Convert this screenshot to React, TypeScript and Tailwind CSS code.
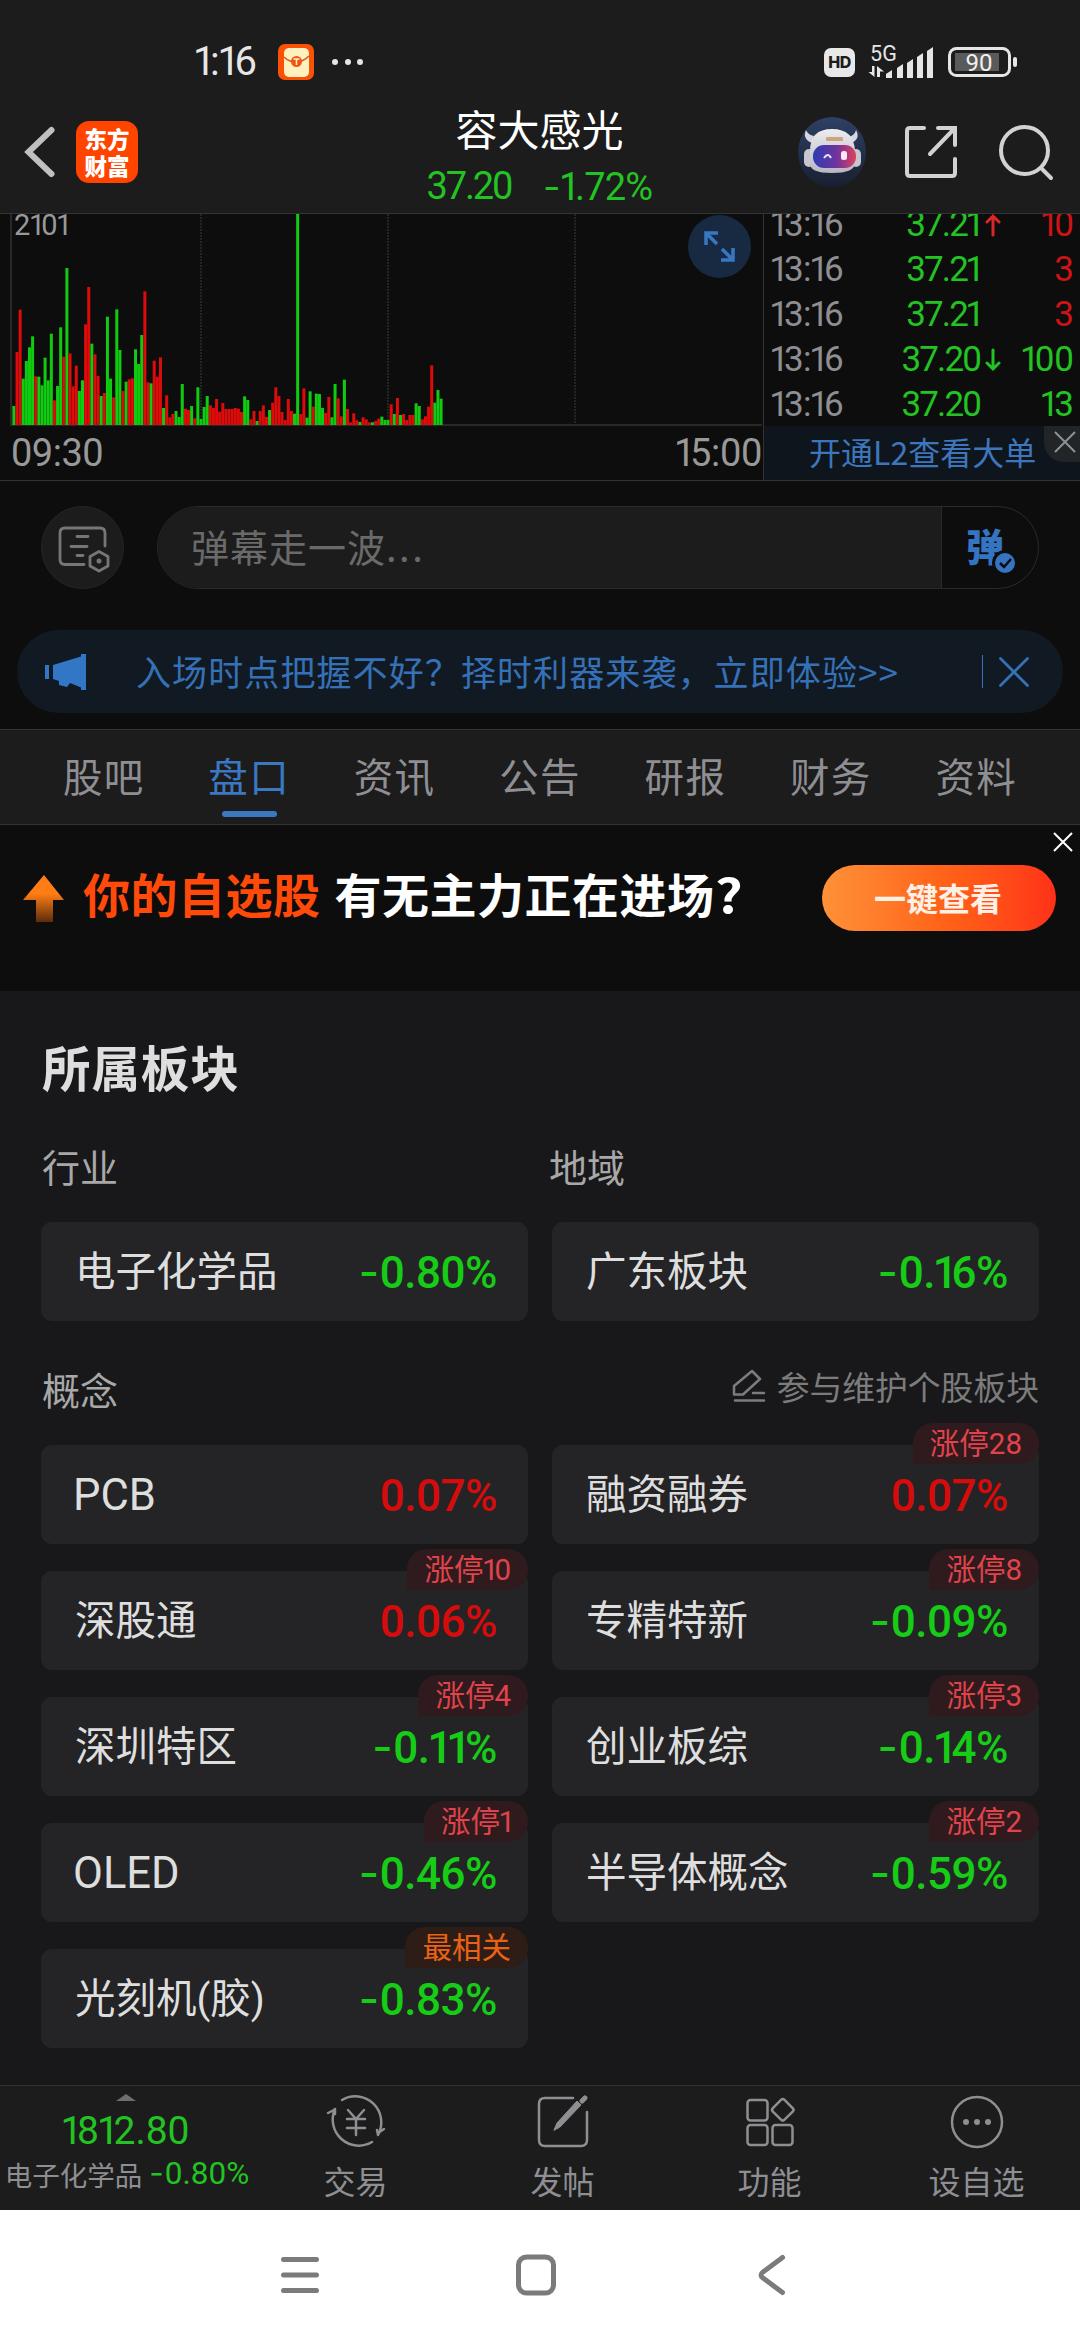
import { Fragment, type ReactNode } from "react";
import clsx from "clsx";

type Sector = {
    name: string;
    change: string;
    tag?: string;
    hot?: boolean;
};

const TABS = ["股吧", "盘口", "资讯", "公告", "研报", "财务", "资料"];

const TRADES = [
    { time: "13:16", price: "37.21", dir: "up", volume: "10", buy: true },
    { time: "13:16", price: "37.21", dir: "", volume: "3", buy: true },
    { time: "13:16", price: "37.21", dir: "", volume: "3", buy: true },
    { time: "13:16", price: "37.20", dir: "down", volume: "100", buy: false },
    { time: "13:16", price: "37.20", dir: "", volume: "13", buy: false },
];

const CONCEPTS: Sector[] = [
    { name: "PCB", change: "0.07%" },
    { name: "融资融券", change: "0.07%", tag: "涨停28" },
    { name: "深股通", change: "0.06%", tag: "涨停10" },
    { name: "专精特新", change: "-0.09%", tag: "涨停8" },
    { name: "深圳特区", change: "-0.11%", tag: "涨停4" },
    { name: "创业板综", change: "-0.14%", tag: "涨停3" },
    { name: "OLED", change: "-0.46%", tag: "涨停1" },
    { name: "半导体概念", change: "-0.59%", tag: "涨停2" },
    { name: "光刻机(胶)", change: "-0.83%", tag: "最相关", hot: true },
];

// Minute volume, one entry per bar: g = falling, r = rising, number = height * 3
const VOLUME = (
    "g57 r219 r346 g139 g192 g233 g266 r146 g145 g119 g202 g134 g274 r74 g117 g293 r205 g471 r215 r116 " +
    "r178 g102 g134 r302 r414 g244 r212 r147 g87 r96 g325 g139 r83 g347 g225 r102 g130 r137 r140 g227 " +
    "g183 g270 r401 r128 g125 r193 r145 r203 g51 r89 r23 r33 g42 g24 g123 r49 r45 g57 r20 g113 " +
    "g18 g54 g87 r59 r51 r78 r40 r66 r48 r48 r48 r51 r49 r39 g86 g75 r17 r42 g12 r42 " +
    "r59 r24 g45 r67 r113 r87 r39 r15 r78 r42 g34 g640 r33 r110 g22 g101 r55 g94 g93 g51 " +
    "r36 r84 g23 g123 r80 r26 g136 r48 r8 r35 r14 g9 r23 r17 r8 g8 r12 r19 g25 g15 " +
    "g15 r62 g33 r81 g30 r33 r15 r30 r30 g65 g57 r17 r26 r55 r179 g67 g105 g79"
)
    .split(" ")
    .map((s) => ({ up: s[0] === "r", h: Number(s.slice(1)) / 3 }));

// Figures: narrow "1" and a wide dash
function Num({ children, className }: { children: string; className?: string }) {
    return (
        <span className={clsx("whitespace-nowrap font-['Roboto','Noto_Sans_CJK_SC',sans-serif]", className)}>
            {children.split(/(1+|-)/).map((part, i) => {
                if (part[0] === "1") return <span key={i} className="-ml-[0.05em] tracking-[-0.14em]">{part}</span>;
                if (part === "-") return <span key={i} className="font-['Inter',sans-serif] mr-[0.03em]">-</span>;
                return <Fragment key={i}>{part}</Fragment>;
            })}
        </span>
    );
}

function StatusBar() {
    return (
        <div className="flex h-[98px] items-center pl-[195px] pr-[62px] pt-[26px]">
            <Num className="w-[64px] text-[40px] leading-none text-[#e6e6e6]">1:16</Num>
            <svg className="ml-[19px]" width="36" height="36" viewBox="0 0 36 36">
                <rect width="36" height="36" rx="7" fill="#fa5205" />
                <rect x="6" y="4" width="25" height="29" rx="5" fill="#fff0c0" />
                <path d="M6 13q5 5 12 5t13-6" fill="none" stroke="#e0531a" strokeWidth="1.5" />
                <circle cx="18.500" cy="17.500" r="5.500" fill="#ef5612" />
                <path d="M15.500 15h6M18.500 15v6" stroke="#fff0c8" strokeWidth="1.500" />
            </svg>
            <div className="ml-[18px] flex gap-[6.500px]">
                <i className="size-[6px] rounded-full bg-[#e6e6e6]" />
                <i className="size-[6px] rounded-full bg-[#e6e6e6]" />
                <i className="size-[6px] rounded-full bg-[#e6e6e6]" />
            </div>
            <span className="ml-auto flex h-[29px] w-[31px] items-center justify-center rounded-[7px] bg-[#e8e8e8] font-['Inter',sans-serif] text-[16px] font-extrabold tracking-[-0.5px] text-[#1c1c1c]">
                HD
            </span>
            <svg className="ml-[12px] overflow-visible font-['Roboto',sans-serif]" width="69" height="36" viewBox="865 44 69 36" fill="#e6e6e6">
                <text x="868" y="60.500" fontSize="21.500" textLength="27">5G</text>
                <path d="M870 66h2.500v11l-6-5h3.500zM875 77V66l7 5.500h-4V77z" />
                <path d="M884 78v-4l6-4v8zM895 78V68l6-4v14zM905 78V63l6-4v19zM915 78V57l6-4v25zM925 78V51l6-4v31z" />
            </svg>
            <svg className="ml-[11px]" width="71" height="32" viewBox="945 46 71 32">
                <rect x="947.500" y="48.500" width="60" height="27" rx="7" fill="none" stroke="#e6e6e6" strokeWidth="3" />
                <rect x="953" y="53" width="44" height="18" fill="#5a5a5a" />
                <rect x="1011" y="57" width="4" height="10" rx="2" fill="#e6e6e6" />
                <text x="977" y="70.500" textAnchor="middle" fontSize="24" fill="#f0f0f0" className="font-['Roboto',sans-serif]">90</text>
            </svg>
        </div>
    );
}

function Robot() {
    return (
        <svg className="block" width="68" height="70" viewBox="0 0 68 70">
            <defs>
                <linearGradient id="sky" x1="0" y1="0" x2="0" y2="1">
                    <stop offset="0" stopColor="#2e4065" />
                    <stop offset="1" stopColor="#182031" />
                </linearGradient>
                <linearGradient id="visor" x1="0" y1="0" x2="1" y2="0">
                    <stop offset="0" stopColor="#2b3db0" />
                    <stop offset="0.550" stopColor="#70349e" />
                    <stop offset="1" stopColor="#e0405a" />
                </linearGradient>
                <linearGradient id="shell" x1="0" y1="0" x2="0" y2="1">
                    <stop offset="0" stopColor="#ececf0" />
                    <stop offset="1" stopColor="#b9b6c2" />
                </linearGradient>
            </defs>
            <ellipse cx="34" cy="35" rx="34" ry="35" fill="url(#sky)" />
            <path d="M14 26Q4 22 8 13q2 5 8 6zM53 26q10-4 5-13-1 5-7 7z" fill="#d6d6de" />
            <rect x="6" y="32" width="10" height="18" rx="5" fill="#c6c5d0" />
            <rect x="53" y="32" width="10" height="18" rx="5" fill="#c6c5d0" />
            <path d="M12 34Q12 12 34 12t23 22v12q0 10-23 10T12 46z" fill="url(#shell)" />
            <rect x="28" y="20" width="17" height="4" rx="1" fill="#cda57c" />
            <rect x="15" y="28" width="43" height="23" rx="11" fill="url(#visor)" />
            <path d="M26 41q4-6 7 0" fill="none" stroke="#dfe6ff" strokeWidth="2" />
            <rect x="43" y="34" width="6" height="9" rx="2.500" fill="#ffe8f4" />
        </svg>
    );
}

function Header() {
    return (
        <header className="flex h-[116px] items-start justify-between border-b border-[#333] pl-[23px] pr-[24px]">
            <div className="flex w-[260px] items-center pt-[23px]">
                <svg width="34" height="62" viewBox="0 0 34 62">
                    <path d="M28.500 9 5.500 31l23 22" fill="none" stroke="#c0c0c0" strokeWidth="6" strokeLinecap="round" />
                </svg>
                <div className="ml-[19px] flex h-[62px] w-[62px] flex-col items-center justify-center rounded-[13px] bg-[#ff4400] font-['Noto_Sans_CJK_SC',sans-serif] text-[22.500px] font-black leading-[27px] text-white">
                    <span>东方</span>
                    <span>财富</span>
                </div>
            </div>
            <div className="flex flex-col items-center pt-[3px]">
                <h1 className="text-[42px] leading-[54px] text-white">容大感光</h1>
                <div className="mt-[6px] flex gap-[32px] text-[38px] leading-[50px] text-[#22c322]">
                    <Num className="tracking-[-2.200px]">37.20</Num>
                    <Num className="tracking-[-0.800px]">-1.72%</Num>
                </div>
            </div>
            <div className="flex w-[260px] items-center justify-end pt-[19px]">
                <Robot />
                <svg className="ml-[36px]" width="58" height="58" viewBox="901 123 58 58" fill="none" stroke="#d2d2d2" strokeWidth="4" strokeLinecap="round">
                    <path d="M923 128h-14q-3 0-3 3v42q0 3 3 3h42q3 0 3-3v-14M937 128h17v17M953 129l-24 25" />
                </svg>
                <svg className="ml-[36px]" width="60" height="60" viewBox="995 121 60 60" fill="none" stroke="#d2d2d2" strokeWidth="4" strokeLinecap="round">
                    <circle cx="1023.500" cy="149.500" r="23.500" />
                    <path d="m1040 167 10 10" />
                </svg>
            </div>
        </header>
    );
}

function VolumeChart() {
    return (
        <div className="relative w-[763px]">
            <svg className="block" width="763" height="212" viewBox="0 214 763 212">
                <path d="M201 214v210M388 214v210M575 214v210" stroke="#2c2c2c" strokeWidth="1.500" strokeDasharray="2 1" />
                <path d="M11 214v211M10 425h752" stroke="#282828" strokeWidth="2" fill="none" />
                {VOLUME.map((v, i) => (
                    <rect key={i} x={12.4 + i * 3.118} y={425 - v.h} width="3" height={v.h} fill={v.up ? "#de0b0b" : "#10cc10"} />
                ))}
            </svg>
            <div className="flex h-[54px] items-center justify-between pl-[11px] pr-[1px] text-[38px] leading-none text-[#999]">
                <Num className="tracking-[-0.500px]">09:30</Num>
                <Num className="tracking-[-0.300px]">15:00</Num>
            </div>
            <Num className="absolute left-[14px] top-[-3px] text-[29px] leading-[28px] text-[#999]">2101</Num>
            <svg className="absolute left-[688px] top-px" width="63" height="63" viewBox="688 215 63 63">
                <circle cx="719.500" cy="246.500" r="31.500" fill="#182a42" />
                <path d="M706 245v-12h12M706 233l11 11M721 260h12v-12M733 260l-11-11" fill="none" stroke="#3878c2" strokeWidth="3.500" />
            </svg>
        </div>
    );
}

function Trades() {
    return (
        <div className="flex w-[317px] flex-col border-l border-[#333]">
            <div className="h-[212px] overflow-hidden">
                <div className="-mt-[12px] text-[35px] leading-[45px]">
                    {TRADES.map((t, i) => (
                        <div key={i} className="flex h-[45px] items-center pl-[7px] pr-[6px]">
                            <Num className="w-[90px] tracking-[-0.600px] text-[#8e8e93]">{t.time}</Num>
                            <Num className="w-[119px] text-right tracking-[-1.900px] text-[#22c322]">{t.price}</Num>
                            <svg className="ml-[5px]" width="16" height="24" viewBox="0 0 16 24" fill="none" strokeWidth="3" strokeLinecap="round">
                                {t.dir === "up" && <path d="M8 22V3M2 9l6-6 6 6" stroke="#dc2626" />}
                                {t.dir === "down" && <path d="M8 2v19M2 15l6 6 6-6" stroke="#22c322" />}
                            </svg>
                            <Num className={clsx("ml-auto", t.buy ? "text-[#cc1414]" : "text-[#22c322]")}>{t.volume}</Num>
                        </div>
                    ))}
                </div>
            </div>
            <div className="relative flex h-[54px] items-center bg-[#0f151c] pb-[5px] pl-[45px] text-[32px] text-[#3d76bd]">
                开通L2查看大单
                <div className="absolute right-0 top-0 flex h-[36px] w-[36px] items-center justify-center rounded-bl-[20px] bg-[#212527] pl-[6px] pb-[4px]">
                    <svg width="22" height="22" viewBox="0 0 22 22" stroke="#8f9193" strokeWidth="2">
                        <path d="m1 1 20 20M21 1 1 21" />
                    </svg>
                </div>
            </div>
        </div>
    );
}

function Danmaku() {
    return (
        <div className="flex h-[108px] items-end px-[41px]">
            <div className="flex size-[83px] items-center justify-center rounded-full border border-[#262626] bg-[#1c1c1c]">
                <svg width="54" height="54" viewBox="56 521 54 54" fill="none" stroke="#767676" strokeWidth="2.800" strokeLinecap="round">
                    <path d="M84 564.500H65q-5 0-5-5V533q0-5 5-5h35q5 0 5 5v13M77 536.500h11M71 546.500h16M77 555.500h6" />
                    <path d="m99 551.500 9 5v9.500l-9 5-9-5v-9.500z" strokeLinejoin="round" />
                    <circle cx="99" cy="561" r="2.500" fill="#767676" stroke="none" />
                </svg>
            </div>
            <div className="ml-[33px] flex h-[83px] flex-1 overflow-hidden rounded-full border border-[#2a2a2a]">
                <div className="flex flex-1 items-center border-r border-[#2a2a2a] bg-[#1c1c1c] pb-[5px] pl-[33px] text-[38px] tracking-[1px] text-[#6a6a6a]">
                    弹幕走一波<span className="tracking-[2.500px]">...</span>
                </div>
                <div className="relative w-[96px] pl-[24px] pt-[15px] text-[38px] font-black leading-[46px] text-[#3474c0]">
                    弹
                    <svg className="absolute left-[50px] top-[43px]" width="26" height="26" viewBox="0 0 26 26">
                        <circle cx="13" cy="13" r="11.500" fill="#3474c0" stroke="#0d0d0d" strokeWidth="3" />
                        <path d="m8 13 4 4 7-8" fill="none" stroke="#0d0d0d" strokeWidth="2.500" />
                    </svg>
                </div>
            </div>
        </div>
    );
}

function Notice() {
    return (
        <div className="mx-[17px] mt-[41px] flex h-[83px] items-center rounded-full bg-[#111a22] pl-[28px] pr-[33px] text-[#3671b8]">
            <svg width="42" height="38" viewBox="0 0 42 38" fill="#3276c6">
                <path d="M0 12h4v14H0zM8 12l28-8.500V1h5v36h-5v-2.500L25 30l-3 4-8-2v-4l-6-2z" />
            </svg>
            <p className="ml-[49px] whitespace-nowrap pb-[1px] text-[35px] tracking-[1.100px]">
                入场时点把握不好？择时利器来袭，立即体验&gt;&gt;
            </p>
            <i className="ml-auto h-[33px] w-px bg-[#3671b8]" />
            <svg className="ml-[15px]" width="32" height="32" viewBox="0 0 32 32" fill="none" stroke="#3671b8" strokeWidth="2.800" strokeLinecap="round">
                <path d="m2.500 2.500 27 27M29.500 2.500l-27 27" />
            </svg>
        </div>
    );
}

function Tabs() {
    return (
        <nav className="mt-[16px] flex h-[96px] border-y border-[#333] bg-[#1c1c1c] px-[31px]">
            {TABS.map((tab) => {
                const active = tab === "盘口";
                return (
                    <div key={tab} className={clsx("flex flex-1 flex-col items-center pt-[16px] text-[39.500px] leading-[58px] tracking-[1.300px]", active ? "text-[#3a78c2]" : "text-[#8e8e93]")}>
                        {tab}
                        {active && <i className="mt-[7px] h-[6px] w-[55px] rounded-full bg-[#3a78c2]" />}
                    </div>
                );
            })}
        </nav>
    );
}

function Banner() {
    return (
        <div className="relative flex h-[166px] items-start pl-[23px] pr-[24px] pt-[40px] font-bold">
            <svg className="mt-[10px]" width="42" height="48" viewBox="0 0 42 48">
                <defs>
                    <linearGradient id="rise" x1="0" y1="0" x2="0" y2="1">
                        <stop offset="0.400" stopColor="#ff7d14" />
                        <stop offset="1" stopColor="#5c2c0c" />
                    </linearGradient>
                </defs>
                <path d="m21 0 20 25H30v22H13V25H0z" fill="url(#rise)" />
            </svg>
            <p className="-mt-[3px] ml-[18px] whitespace-nowrap text-[47px] leading-[62px] tracking-[0.500px] text-white">
                <span className="mr-[14px] text-[#ff4a0a]">你的自选股</span>
                有无主力正在进场<span className="inline-block origin-left scale-x-[1.150]">?</span>
            </p>
            <div className="ml-auto flex h-[66px] w-[234px] items-center justify-center rounded-full bg-linear-to-r from-[#ff9138] via-[#ff6418] to-[#ff3018] pb-[3px] pr-[2px] text-[32px] text-[#fff0e8]">
                一键查看
            </div>
            <svg className="absolute right-[6px] top-[6px]" width="22" height="22" viewBox="0 0 22 22" stroke="#fff" strokeWidth="2">
                <path d="m2 2 18 18M20 2 2 20" />
            </svg>
        </div>
    );
}

function SectorCard({ name, change, tag, hot }: Sector) {
    return (
        <div className="relative flex h-[99px] items-center justify-between rounded-[11px] bg-[#242426] pl-[34px] pr-[31px] pt-[2px]">
            <span
                className={clsx(
                    "whitespace-nowrap font-['Roboto','Noto_Sans_CJK_SC',sans-serif] text-[#dedede]",
                    /^[A-Z]+$/.test(name) ? "-ml-[2px] text-[43.500px]" : "text-[40.500px]"
                )}
            >
                {name}
            </span>
            <Num className={clsx("text-[44px] font-medium tracking-[-0.500px]", change.startsWith("-") ? "text-[#16cc16]" : "text-[#d60c0c]")}>{change}</Num>
            {tag && (
                <span
                    className={clsx(
                        "absolute -top-[22px] right-0 flex h-[41px] items-center rounded-[20px] rounded-bl-none px-[17px] pt-[2px] text-[29.500px]",
                        hot ? "bg-[#2e1d16] text-[#ea6214]" : "bg-[#2f1b1d] text-[#e0434b]"
                    )}
                >
                    <Num>{tag}</Num>
                </span>
            )}
        </div>
    );
}

function Sectors() {
    return (
        <section className="h-[1094px] bg-[#18181a] px-[41px] pt-[45px]">
            <h2 className="ml-[1px] text-[48.500px] font-bold leading-[60px] tracking-[0.900px] text-[#dedede]">所属板块</h2>
            <div className="mt-[43px] grid grid-cols-2 gap-x-[24px] text-[38px] leading-[54px] text-[#a8a8a8]">
                <span className="ml-[1px]">行业</span>
                <span className="-ml-[3px]">地域</span>
            </div>
            <div className="mt-[29px] grid grid-cols-2 gap-x-[24px]">
                <SectorCard name="电子化学品" change="-0.80%" />
                <SectorCard name="广东板块" change="-0.16%" />
            </div>
            <div className="mt-[41px] flex items-center justify-between leading-[54px]">
                <span className="ml-[1px] text-[38px] text-[#a8a8a8]">概念</span>
                <span className="-mt-[6px] flex items-center gap-[11px] text-[32.800px] text-[#7c7c7c]">
                    <svg width="34" height="34" viewBox="0 0 34 34" fill="none" stroke="#7c7c7c" strokeWidth="2.500" strokeLinecap="round" strokeLinejoin="round">
                        <path d="M2 25.500V17L20 2l8 8-17 15.500zM21 24h11M3 31.500h29" />
                    </svg>
                    参与维护个股板块
                </span>
            </div>
            <div className="mt-[29px] grid grid-cols-2 gap-x-[24px] gap-y-[27px]">
                {CONCEPTS.map((s) => (
                    <SectorCard key={s.name} {...s} />
                ))}
            </div>
        </section>
    );
}

function Action({ label, children }: { label: string; children: ReactNode }) {
    return (
        <div className="flex w-[207px] flex-col items-center pt-[6px] text-[32px] leading-[46px] text-[#8e8e93]">
            <svg width="62" height="60" viewBox="-31 -30 62 60" fill="none" stroke="#8e8e93" strokeWidth="2.500" strokeLinecap="round" strokeLinejoin="round">
                {children}
            </svg>
            <span className="mt-[5px]">{label}</span>
        </div>
    );
}

function BottomBar() {
    return (
        <div className="flex h-[125px] border-t border-[#333] bg-[#1c1c1c]">
            <div className="flex w-[252px] flex-col items-center">
                <svg className="mt-[8px] block" width="20" height="7" viewBox="0 0 20 7">
                    <path d="M10 0 20 7H0z" fill="#6e6e73" />
                </svg>
                <Num className="mt-[8px] text-[39px] leading-[44px] text-[#22c322]">1812.80</Num>
                <div className="mt-[2px] flex items-center gap-[7px] whitespace-nowrap pl-[2px] text-[27.500px] leading-[36px] text-[#8e8e93]">
                    电子化学品
                    <Num className="text-[31.500px] text-[#22c322]">-0.80%</Num>
                </div>
            </div>
            <Action label="交易">
                <path d="M-14-22A26 26 0 0 1 22 13l0-2 6-4M22 13l-1-5M16 20A26 26 0 0 1-21-13l-1 1-6 3M-21-13l0 5" />
                <path d="m-8-12 8 9 8-9M-9-3H9M-9 6H9M0-3v16" />
            </Action>
            <Action label="发帖">
                <path d="M10-24h-28q-6 0-6 6v36q0 6 6 6h36q6 0 6-6V-10" />
                <path d="m-9 8 3-7L14-21l4 4L-3 5z" fill="#8e8e93" strokeWidth="1" />
                <path d="m19-21 3-3" strokeWidth="5" />
            </Action>
            <Action label="功能">
                <rect x="-22.500" y="-22" width="20" height="20.500" rx="3" />
                <rect x="-22.500" y="3" width="20" height="20" rx="3" />
                <rect x="2.500" y="3" width="20" height="20" rx="3" />
                <rect x="4.500" y="-20.500" width="16.500" height="16.500" rx="2.500" transform="rotate(45 12.700 -12.200)" />
            </Action>
            <Action label="设自选">
                <circle cx="0" cy="0" r="25" />
                <g fill="#8e8e93" stroke="none">
                    <circle cx="-11" cy="0" r="3" />
                    <circle cx="0" cy="0" r="3" />
                    <circle cx="11" cy="0" r="3" />
                </g>
            </Action>
        </div>
    );
}

function SystemNav() {
    return (
        <div className="flex h-[130px] items-center justify-center gap-[186px] bg-white pr-[8px]">
            <svg width="50" height="50" viewBox="-25 -25 50 50" fill="none" stroke="#7b7b7b" strokeWidth="5" strokeLinecap="round">
                <path d="M-16.500-15.500h33M-16.500 0h33M-16.500 15.500h33" />
            </svg>
            <svg width="50" height="50" viewBox="-25 -25 50 50" fill="none" stroke="#7b7b7b" strokeWidth="5">
                <rect x="-17.500" y="-18" width="35" height="36" rx="8" />
            </svg>
            <svg width="50" height="50" viewBox="-25 -25 50 50" fill="none" stroke="#7b7b7b" strokeWidth="5" strokeLinecap="round">
                <path d="M10.500-17.500-9-3q-4 3 0 6l19.500 14.500" />
            </svg>
        </div>
    );
}

export default function App() {
    return (
        <div className="flex h-[2340px] w-[1080px] flex-col overflow-hidden bg-[#0d0d0d] font-['Noto_Sans_CJK_SC',sans-serif]">
            <div className="h-[214px] bg-[#1c1c1c]">
                <StatusBar />
                <Header />
            </div>
            <div className="flex h-[267px] overflow-hidden border-b border-[#333]">
                <VolumeChart />
                <Trades />
            </div>
            <Danmaku />
            <Notice />
            <Tabs />
            <Banner />
            <Sectors />
            <BottomBar />
            <SystemNav />
        </div>
    );
}
